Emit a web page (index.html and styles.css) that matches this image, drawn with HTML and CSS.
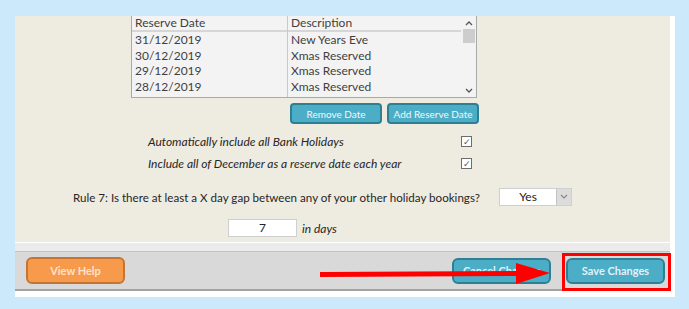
FILE: index.html
```html
<!Doctype html>
<html>
<head>
  <meta charset="utf-8">
  <title>Reserve dates</title>
  <link rel="stylesheet" href="styles.css">
</head>
<body>
  <div class="panel">
    <div class="content">

      <div class="grid-box">
        <div class="cols">
          <div class="col col-date">
            <div class="hd">Reserve Date</div>
            <div class="cell">31/12/2019</div>
            <div class="cell">30/12/2019</div>
            <div class="cell">29/12/2019</div>
            <div class="cell">28/12/2019</div>
          </div>
          <div class="col col-desc">
            <div class="hd">Description</div>
            <div class="cell">New Years Eve</div>
            <div class="cell">Xmas Reserved</div>
            <div class="cell">Xmas Reserved</div>
            <div class="cell">Xmas Reserved</div>
          </div>
        </div>
        <div class="scroll">
          <svg class="arr" width="8" height="6" viewBox="0 0 8 6"><path d="M1 5 L4 2 L7 5" stroke="#555" stroke-width="1.3" fill="none"/></svg>
          <span class="thumb"></span>
          <svg class="arr down" width="8" height="6" viewBox="0 0 8 6"><path d="M1 1 L4 4 L7 1" stroke="#555" stroke-width="1.3" fill="none"/></svg>
        </div>
      </div>

      <div class="btn-row">
        <button class="btn teal">Remove Date</button>
        <button class="btn teal">Add Reserve Date</button>
      </div>

      <div class="opt">
        <span class="opt-label">Automatically include all Bank Holidays</span>
        <span class="tick">&#10003;</span>
      </div>
      <div class="opt">
        <span class="opt-label">Include all of December as a reserve date each year</span>
        <span class="tick">&#10003;</span>
      </div>

      <div class="rule">
        <span class="rule-label">Rule 7: Is there at least a X day gap between any of your other holiday bookings?</span>
        <div class="select">
          <span class="sel-val">Yes</span>
          <span class="sel-btn">
            <svg width="8" height="6" viewBox="0 0 8 6"><path d="M1 1 L4 4 L7 1" stroke="#888" stroke-width="1.2" fill="none"/></svg>
          </span>
        </div>
      </div>

      <div class="days">
        <span class="num">7</span>
        <span class="unit">in days</span>
      </div>
    </div>

    <div class="strip"></div>
    <div class="footer">
      <button class="btn orange">View Help</button>
      <div class="right">
        <button class="btn teal big">Cancel Changes</button>
        <button class="btn teal big">Save Changes</button>
      </div>
    </div>
  </div>

  <div class="mark-box"></div>
  <svg class="arrow" width="240" height="30" viewBox="0 0 240 30">
    <path d="M2 15.5 L205 14.5" stroke="#ff0000" stroke-width="5" fill="none"/>
    <polygon points="198,4 232,14 198,25" fill="#ff0000"/>
  </svg>
</body>
</html>
```

FILE: styles.css
```css
body{
  margin: 0;
  background: #cce9fc;
  font-family: Lato, "Open Sans", sans-serif;
  font-size: 11px;
  color: #3f3f3f;
  padding: 16px 0 0 15px;
  position: relative;
  height: 293px;
}

.panel{
  width: 660px;
  height: 281px;
  background: #fff;
}

.content{
  width: 655px;
  height: 226px;
  background: #eeebe1;
  overflow: hidden;
}

/* datasheet */
.grid-box{
  margin-left: 116px;
  width: 344px;
  height: 81px;
  border: 1px solid #a9a9a9;
  border-top: none;
  background: #f3f3f3;
  display: flex;
  overflow: hidden;
}
.cols{
  display: flex;
  flex: 1;
}
.col{
  display: flex;
  flex-direction: column;
}
.col-date{
  width: 155px;
  border-right: 1px solid #c9c9c9;
}
.col-desc{
  flex: 1;
}
.hd{
  height: 14px;
  line-height: 14px;
  padding-left: 3px;
  border-bottom: 2px solid #d6d6d6;
  font-size: 12px;
}
.cell{
  height: 15.5px;
  line-height: 15.5px;
  padding-left: 3px;
  font-size: 12px;
  flex-shrink: 0;
}
.scroll{
  width: 15px;
  display: flex;
  flex-direction: column;
  align-items: center;
  padding: 4px 0 3px;
}
.arr{
  flex-shrink: 0;
}
.thumb{
  width: 12px;
  height: 14px;
  margin-top: 3px;
  background: #cdcdcd;
}
.arr.down{
  margin-top: auto;
}

/* buttons */
.btn{
  font-family: inherit;
  color: #f2f8fb;
  border-radius: 4px;
  padding: 0;
  white-space: nowrap;
  cursor: pointer;
}
.teal{
  background: #4cadc7;
  border: 2px solid #2f7f94;
}
.btn-row{
  display: flex;
  gap: 5px;
  margin: 5px 0 0 275px;
}
.btn-row .btn{
  height: 21px;
  width: 92px;
  font-size: 10px;
}

/* options */
.opt{
  display: flex;
  align-items: center;
  margin-left: 133px;
  height: 22px;
}
.btn-row + .opt{
  margin-top: 6px;
}
.opt-label{
  width: 313px;
  font-style: italic;
  font-size: 12px;
  color: #262626;
}
.tick{
  width: 9px;
  height: 9px;
  border: 1px solid #6d6d6d;
  background: #fff;
  font-size: 9px;
  line-height: 9px;
  text-align: center;
  color: #555;
}

.rule{
  display: flex;
  align-items: center;
  margin: 14px 0 0 58px;
  height: 18px;
}
.rule-label{
  width: 426px;
  color: #262626;
  font-size: 11.6px;
  white-space: nowrap;
}
.select{
  display: flex;
  width: 71px;
  height: 16px;
  border: 1px solid #cfcfcf;
  background: #fff;
}
.sel-val{
  flex: 1;
  text-align: center;
  line-height: 16px;
  font-size: 12px;
  color: #222;
}
.sel-btn{
  width: 14px;
  background: #dcdcdc;
  border-left: 1px solid #c4c4c4;
  display: flex;
  align-items: center;
  justify-content: center;
}

.days{
  display: flex;
  align-items: center;
  gap: 5px;
  margin: 13px 0 0 213px;
}
.num{
  width: 67px;
  height: 16px;
  border: 1px solid #cfcfcf;
  background: #fff;
  text-align: center;
  line-height: 16px;
  font-size: 12px;
  color: #222;
}
.unit{
  font-style: italic;
  font-size: 12px;
  color: #262626;
}

/* footer */
.strip{
  width: 655px;
  height: 8px;
  margin-top: 1px;
  background: #ebebeb;
  border-bottom: 1px solid #c3c3c3;
}
.footer{
  width: 644px;
  height: 37px;
  padding-left: 11px;
  background: #d9d9d9;
  border-bottom: 2px solid #a3a3a3;
  display: flex;
  align-items: center;
}
.orange{
  background: #f79a4c;
  border: 2px solid #c47533;
  border-radius: 6px;
  width: 99px;
  height: 27px;
  font-weight: bold;
  font-size: 11px;
  color: #fde3cc;
}
.right{
  margin-left: auto;
  display: flex;
  gap: 15px;
  margin-right: 5px;
}
.big{
  width: 99px;
  height: 26px;
  border-radius: 6px;
  font-size: 11px;
  font-weight: bold;
  color: #e3f1f6;
}

/* annotations drawn on top of the screenshot */
.mark-box{
  position: absolute;
  left: 562px;
  top: 253px;
  width: 103px;
  height: 32px;
  border: 3px solid #ff0000;
}
.arrow{
  position: absolute;
  left: 318px;
  top: 259px;
}
```
